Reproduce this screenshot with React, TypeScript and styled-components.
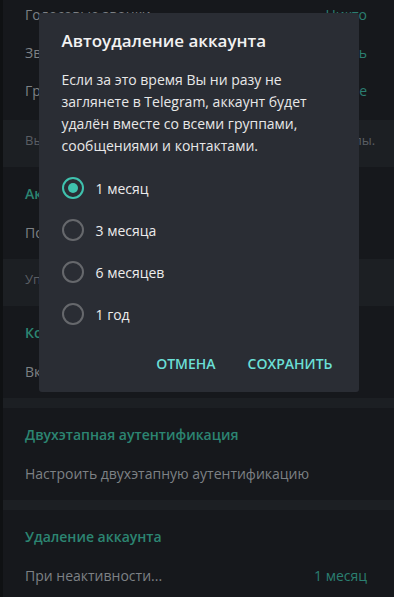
import React, { useState } from 'react';
import styled, { createGlobalStyle } from 'styled-components';

const GlobalStyle = createGlobalStyle`
  html, body {
    margin: 0;
    padding: 0;
    background: #16181c;
  }
  body {
    font-family: "Open Sans", "Noto Sans", sans-serif;
    overflow: hidden;
  }
`;

const Screen = styled.div`
  position: relative;
  width: 394px;
  height: 597px;
  overflow: hidden;
  display: flex;
  align-items: flex-start;
  background: #16181c;
`;

const SideEdge = styled.div`
  width: 3px;
  height: 100%;
  flex-shrink: 0;
  background: #0f1113;
`;

const Settings = styled.div`
  flex: 1;
  min-width: 0;
  display: flex;
  flex-direction: column;
  margin-top: -13px;

  & > * {
    flex-shrink: 0;
  }
`;

const Section = styled.div<{ $bottom?: number }>`
  padding: 8px 0 ${p => (p.$bottom ?? 8)}px;
`;

const SectionTitle = styled.div`
  height: 38px;
  line-height: 38px;
  padding: 0 22px;
  font-size: 14px;
  font-weight: 600;
  color: #2c8572;
`;

const Row = styled.div`
  height: 38px;
  display: flex;
  align-items: center;
  justify-content: space-between;
  gap: 12px;
  padding: 0 27px 0 22px;
  font-size: 14px;
  color: #7d8185;
  white-space: nowrap;
  overflow: hidden;
`;

const RowValue = styled.span`
  color: #2b7f71;
`;

const Hint = styled.div`
  height: 47px;
  box-sizing: border-box;
  padding: 11px 22px 0;
  line-height: 18px;
  font-size: 13px;
  color: #5a5e63;
  background: #1c1f23;
  white-space: nowrap;
  overflow: hidden;
`;

const Divider = styled.div`
  height: 10px;
  background: #1c1f23;
`;

const Layer = styled.div`
  position: absolute;
  inset: 0;
  display: flex;
  align-items: flex-start;
  justify-content: center;
  padding-top: 13px;
  padding-left: 3px;
`;

const Box = styled.div`
  width: 320px;
  box-sizing: border-box;
  padding: 17px 16px 11px 23px;
  background: #2a2d34;
  border-radius: 3px;
  display: flex;
  flex-direction: column;
`;

const BoxTitle = styled.div`
  font-size: 17px;
  line-height: 22px;
  font-weight: 600;
  color: #f2f2f2;
`;

const BoxText = styled.div`
  margin-top: 17px;
  font-size: 14px;
  line-height: 22px;
  color: #e8e8e8;
  padding-right: 8px;
`;

const Options = styled.div`
  margin-top: 10px;
  display: flex;
  flex-direction: column;
`;

const Option = styled.label`
  height: 42px;
  display: flex;
  align-items: center;
  gap: 12px;
  font-size: 14px;
  color: #ececec;
  cursor: pointer;
`;

const RadioRing = styled.span<{ $checked: boolean }>`
  width: 22px;
  height: 22px;
  box-sizing: border-box;
  border-radius: 50%;
  border: 2px solid ${p => (p.$checked ? '#3fc2ae' : '#66686c')};
  display: flex;
  align-items: center;
  justify-content: center;
  flex-shrink: 0;

  &::after {
    content: '';
    width: 10px;
    height: 10px;
    border-radius: 50%;
    background: #3fc2ae;
    display: ${p => (p.$checked ? 'block' : 'none')};
  }
`;

const Buttons = styled.div`
  margin-top: 10px;
  display: flex;
  justify-content: flex-end;
  gap: 12px;
`;

const FlatButton = styled.button`
  height: 36px;
  padding: 0 10px;
  border: none;
  background: transparent;
  font-family: "Open Sans", "Noto Sans", sans-serif;
  font-size: 14px;
  font-weight: 600;
  color: #6adfd6;
  text-transform: uppercase;
  cursor: pointer;
`;

const periods = ['1 месяц', '3 месяца', '6 месяцев', '1 год'];

export default function App() {
  const [picked, setPicked] = useState(0);

  return (
    <Screen>
      <GlobalStyle />
      <SideEdge />
      <Settings>
        <Section $bottom={11}>
          <Row>Голосовые звонки<RowValue>Никто</RowValue></Row>
          <Row>Звонки peer-to-peer<RowValue>Настроить</RowValue></Row>
          <Row>Группы и каналы<RowValue>Все</RowValue></Row>
        </Section>
        <Hint>Вы можете выбрать, кто может добавить Вас в группы.</Hint>
        <Section>
          <SectionTitle>Активные сеансы</SectionTitle>
          <Row>Показать все сеансы</Row>
        </Section>
        <Hint>Управляйте сеансами на других устройствах.</Hint>
        <Section>
          <SectionTitle>Код-пароль</SectionTitle>
          <Row>Включить код-пароль</Row>
        </Section>
        <Divider />
        <Section>
          <SectionTitle>Двухэтапная аутентификация</SectionTitle>
          <Row>Настроить двухэтапную аутентификацию</Row>
        </Section>
        <Divider />
        <Section>
          <SectionTitle>Удаление аккаунта</SectionTitle>
          <Row>При неактивности...<RowValue>1 месяц</RowValue></Row>
        </Section>
      </Settings>

      <Layer>
        <Box>
          <BoxTitle>Автоудаление аккаунта</BoxTitle>
          <BoxText>
            Если за это время Вы ни разу не заглянете в Telegram, аккаунт будет удалён вместе со всеми группами, сообщениями и контактами.
          </BoxText>
          <Options>
            {periods.map((p, i) => (
              <Option key={p} onClick={() => setPicked(i)}>
                <RadioRing $checked={picked === i} />
                {p}
              </Option>
            ))}
          </Options>
          <Buttons>
            <FlatButton>Отмена</FlatButton>
            <FlatButton>Сохранить</FlatButton>
          </Buttons>
        </Box>
      </Layer>
    </Screen>
  );
}
